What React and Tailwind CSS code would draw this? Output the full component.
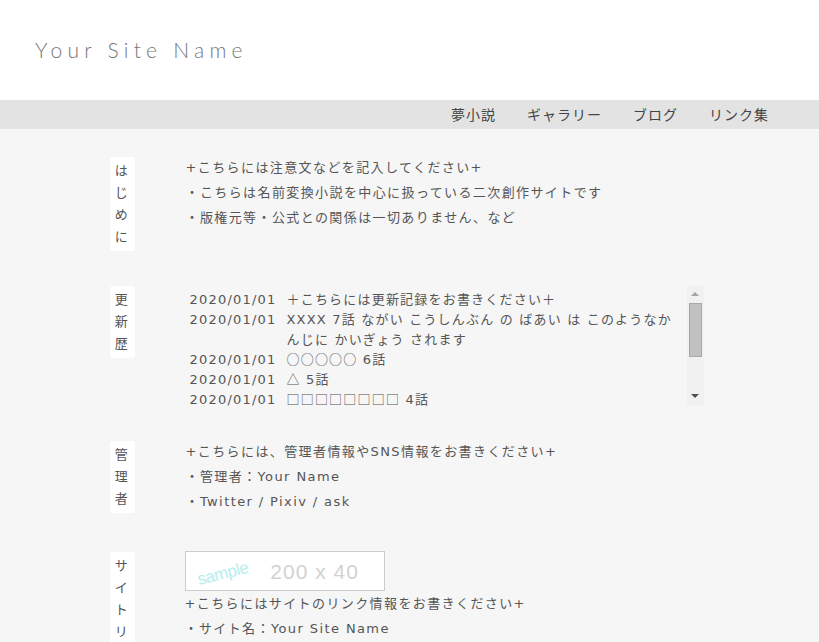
import React from "react";

const FONT = { fontFamily: '"DejaVu Sans", "Noto Sans CJK JP", sans-serif' };
const CJK = { fontFamily: '"Noto Sans CJK JP", sans-serif' };

function Label({ text, className = "" }) {
  return (
    <div
      className={`w-[25px] shrink-0 rounded-[3px] bg-white py-[3px] text-center text-[13px] leading-[22px] text-[#555] ${className}`}
    >
      {Array.from(text).map((c, i) => (
        <div key={i}>{c}</div>
      ))}
    </div>
  );
}

function Sym({ children }) {
  return (
    <span className="leading-none" style={CJK}>
      {children}
    </span>
  );
}

const updates = [
  ["2020/01/01", "＋こちらには更新記録をお書きください＋"],
  ["2020/01/01", "XXXX 7話 ながい こうしんぶん の ばあい は このようなかんじに かいぎょう されます"],
  ["2020/01/01", <><Sym>○○○○○</Sym> 6話</>],
  ["2020/01/01", <><Sym>△</Sym> 5話</>],
  ["2020/01/01", <><Sym>□□□□□□□□</Sym> 4話</>],
];

export default function App() {
  return (
    <div className="min-h-screen bg-[#f6f6f6] text-[#555]" style={FONT}>
      <header className="flex h-[100px] items-center bg-white pl-[35px]">
        <h1
          className="text-[21px] font-light tracking-[0.25em] text-[#777]"
          style={{ fontFamily: '"Lato", "DejaVu Sans", sans-serif' }}
        >
          Your Site Name
        </h1>
      </header>
      <nav
        className="flex h-[29px] items-center justify-end gap-[31px] bg-[#e3e3e3] pr-[50px] text-[14px] tracking-[1px] text-[#444]"
        style={CJK}
      >
        <span>夢小説</span>
        <span>ギャラリー</span>
        <span>ブログ</span>
        <span>リンク集</span>
      </nav>

      <main className="mx-auto w-[600px] pt-[26px] pb-[40px] text-[13px] tracking-[1.4px]">
        {/* はじめに */}
        <section className="flex items-start">
          <Label text="はじめに" className="mt-[2px]" />
          <div className="ml-[51px] leading-[25px]">
            <p>+こちらには注意文などを記入してください+</p>
            <p>・こちらは名前変換小説を中心に扱っている二次創作サイトです</p>
            <p>・版権元等・公式との関係は一切ありません、など</p>
          </div>
        </section>

        {/* 更新歴 */}
        <section className="mt-[35px] flex items-start">
          <Label text="更新歴" />
          <div className="ml-[51px] flex h-[120px] w-[518px]">
            <div className="flex-1 overflow-hidden px-[4px] pt-[4px] leading-[20px] tracking-[1.2px]">
              {updates.map(([d, t], i) => (
                <div key={i} className="flex">
                  <span className="w-[97px] shrink-0">{d}</span>
                  <span className="flex-1">{t}</span>
                </div>
              ))}
            </div>
            <div className="flex w-[17px] shrink-0 flex-col items-center bg-[#f1f1f1]">
              <div className="mt-[6px] h-0 w-0 border-x-[4px] border-b-[4px] border-x-transparent border-b-[#a3a3a3]" />
              <div className="mt-[7px] h-[54px] w-[13px] border border-[#a8a8a8] bg-[#c1c1c1]" />
              <div className="flex-1" />
              <div className="mb-[8px] h-0 w-0 border-x-[4px] border-t-[4px] border-x-transparent border-t-[#505050]" />
            </div>
          </div>
        </section>

        {/* 管理者 */}
        <section className="mt-[33px] flex items-start">
          <Label text="管理者" className="mt-[2px]" />
          <div className="ml-[51px] leading-[25px]">
            <p>+こちらには、管理者情報やSNS情報をお書きください+</p>
            <p>・管理者：Your Name</p>
            <p>・Twitter / Pixiv / ask</p>
          </div>
        </section>

        {/* サイトリンク */}
        <section className="mt-[37px] flex items-start">
          <Label text="サイトリンク" className="mt-[1px]" />
          <div className="ml-[50px] leading-[25px]">
            <div className="flex h-[40px] w-[200px] items-center border border-[#cccccc] bg-white">
              <span
                className="ml-[11px] mt-[4px] inline-block -rotate-[14deg] text-[17px] tracking-[-0.5px] text-[#b6eeee]"
                style={{ fontFamily: '"Liberation Sans", Arial, sans-serif' }}
              >
                sample
              </span>
              <span
                className="ml-[22px] text-[21px] tracking-[1px] text-[#d2d2d2]"
                style={{ fontFamily: '"Liberation Sans", Arial, sans-serif' }}
              >
                200 x 40
              </span>
            </div>
            <p>+こちらにはサイトのリンク情報をお書きください+</p>
            <p>・サイト名：Your Site Name</p>
            <p>・URL：http://</p>
            <p>・管理人：Your Name</p>
          </div>
        </section>
      </main>
    </div>
  );
}
